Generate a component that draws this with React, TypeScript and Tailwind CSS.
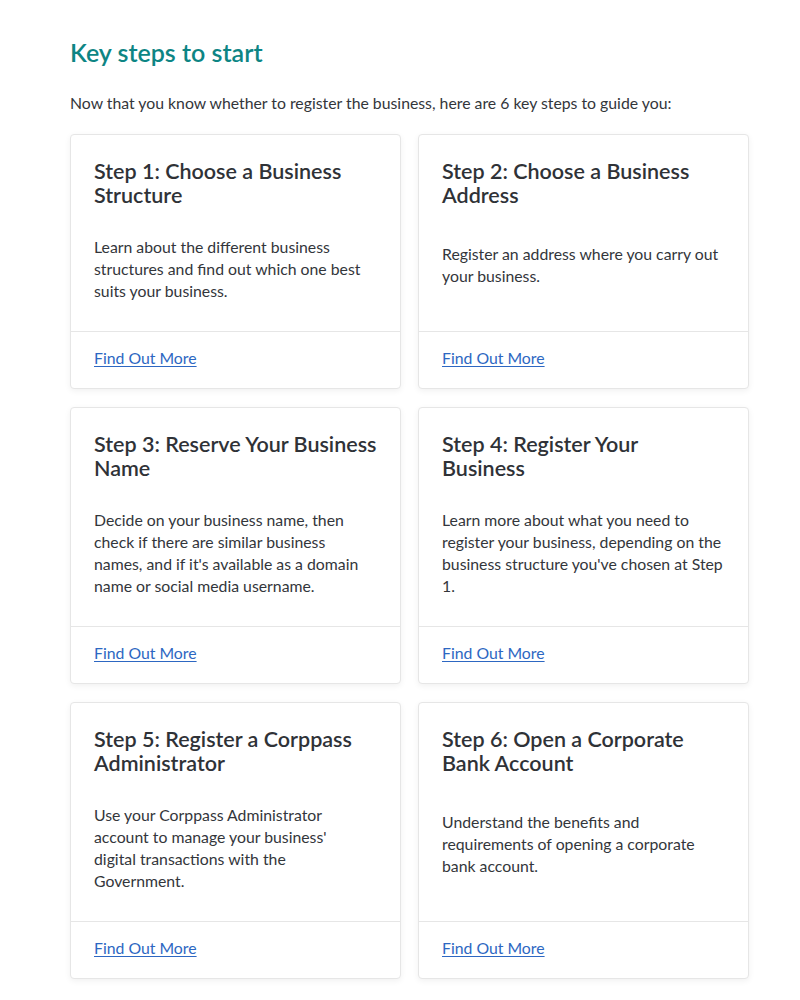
import React from 'react';

// lines are kept as in the original so the wrapping matches
const steps = [
  {
    title: ['Step 1: Choose a Business', 'Structure'],
    body: ['Learn about the different business', 'structures and find out which one best', 'suits your business.'],
  },
  {
    title: ['Step 2: Choose a Business', 'Address'],
    body: ['Register an address where you carry out', 'your business.'],
  },
  {
    title: ['Step 3: Reserve Your Business', 'Name'],
    body: [
      'Decide on your business name, then',
      'check if there are similar business',
      "names, and if it's available as a domain",
      'name or social media username.',
    ],
  },
  {
    title: ['Step 4: Register Your', 'Business'],
    body: [
      'Learn more about what you need to',
      'register your business, depending on the',
      "business structure you've chosen at Step",
      '1.',
    ],
  },
  {
    title: ['Step 5: Register a Corppass', 'Administrator'],
    body: [
      'Use your Corppass Administrator',
      "account to manage your business'",
      'digital transactions with the',
      'Government.',
    ],
  },
  {
    title: ['Step 6: Open a Corporate', 'Bank Account'],
    body: ['Understand the benefits and', 'requirements of opening a corporate', 'bank account.'],
  },
];

const StepCard = ({ title, body }: { title: string[]; body: string[] }) => (
  <div className="flex flex-col bg-white border border-[#e6e6e6] rounded-[4px] shadow-[0_2px_6px_rgba(0,0,0,0.06)]">
    <div className="flex flex-col flex-1 px-[23px] pt-[24px] pb-[29px]">
      <h3 className="text-[21.5px] leading-[24px] font-semibold text-[#2f3237] mb-[29px]">
        {title.map((line, i) => (
          <span key={i} className="block whitespace-nowrap">{line}</span>
        ))}
      </h3>
      <div className="flex-1" />
      <p className="text-[15.8px] leading-[22px] text-[#33363b]">
        {body.map((line, i) => (
          <span key={i} className="block whitespace-nowrap">{line}</span>
        ))}
      </p>
      <div className="flex-[2]" />
    </div>
    <div className="border-t border-[#e6e6e6] px-[23px] pt-[14px] pb-[18px]">
      <a href="#" className="text-[15.8px] leading-[22px] text-[#2d67c2] underline underline-offset-2">
        Find Out More
      </a>
    </div>
  </div>
);

const App = () => {
  return (
    <div className="min-h-screen bg-white font-['Lato',sans-serif] pt-[36px] pl-[70px]">
      <h2 className="text-[25px] leading-[32px] font-semibold text-[#0d8584]">Key steps to start</h2>
      <p className="mt-[24px] text-[15.8px] leading-[22px] text-[#33363b]">
        Now that you know whether to register the business, here are 6 key steps to guide you:
      </p>
      <div className="grid grid-cols-2 gap-x-[17px] gap-y-[18px] w-[679px] mt-[20px]">
        {steps.map((step, index) => (
          <StepCard key={index} title={step.title} body={step.body} />
        ))}
      </div>
    </div>
  );
};

export default App;
